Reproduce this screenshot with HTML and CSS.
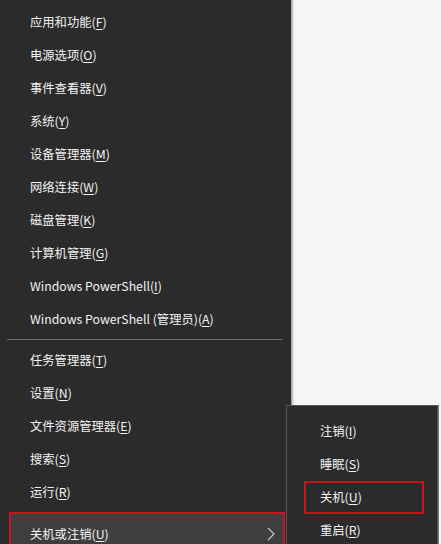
FILE: index.html
```html
<!DOCTYPE html>
<html>
<head>
<meta charset="utf-8">
<link rel="stylesheet" href="styles.css">
</head>
<body>
<div class="screen">
  <div class="menu">
    <div class="item">应用和功能(<u>F</u>)</div>
    <div class="item">电源选项(<u>O</u>)</div>
    <div class="item">事件查看器(<u>V</u>)</div>
    <div class="item">系统(<u>Y</u>)</div>
    <div class="item">设备管理器(<u>M</u>)</div>
    <div class="item">网络连接(<u>W</u>)</div>
    <div class="item">磁盘管理(<u>K</u>)</div>
    <div class="item">计算机管理(<u>G</u>)</div>
    <div class="item">Windows PowerShell(<u>I</u>)</div>
    <div class="item">Windows PowerShell (管理员)(<u>A</u>)</div>
    <div class="sep"></div>
    <div class="item">任务管理器(<u>T</u>)</div>
    <div class="item">设置(<u>N</u>)</div>
    <div class="item">文件资源管理器(<u>E</u>)</div>
    <div class="item">搜索(<u>S</u>)</div>
    <div class="item">运行(<u>R</u>)</div>
    <div class="item hot">
      <span>关机或注销(<u>U</u>)</span>
      <svg class="chev" width="8" height="14" viewBox="0 0 8 14"><path d="M1 1 L7 7 L1 13" fill="none" stroke="#cfcfcf" stroke-width="1.1"/></svg>
    </div>
  </div>
  <div class="shadow"></div>
  <div class="submenu">
    <div class="sitem">注销(<u>I</u>)</div>
    <div class="sitem">睡眠(<u>S</u>)</div>
    <div class="sitem boxed">关机(<u>U</u>)</div>
    <div class="sitem">重启(<u>R</u>)</div>
  </div>
</div>
</body>
</html>
```

FILE: styles.css
```css
html, body {
  margin: 0;
  padding: 0;
}
body {
  width: 441px;
  height: 544px;
  overflow: hidden;
  background: #f5f6f8;
  font-family: "Noto Sans CJK SC", "Noto Sans", sans-serif;
  font-size: 12.3px;
  color: #f2f2f2;
}
.screen {
  position: relative;
  width: 441px;
  height: 544px;
  display: flex;
}
.menu {
  width: 291px;
  height: 544px;
  background: #2b2b2b;
  padding-top: 6px;
  box-sizing: border-box;
  flex: none;
}
.shadow {
  width: 3px;
  height: 544px;
  background: linear-gradient(to right, #8e8e8e, #c9c9c9, #eceef0);
  flex: none;
}
.item {
  height: 33px;
  line-height: 33px;
  padding-left: 30px;
  white-space: nowrap;
}
u {
  text-decoration: underline;
  text-underline-offset: 2px;
  text-decoration-thickness: 1px;
}
.sep {
  height: 1px;
  background: #6e6e6e;
  margin: 3px 9px 4px 7px;
}
.hot {
  height: 40px;
  margin: 3px 6px 0 9px;
  padding-left: 19px;
  border: 2px solid #c8151b;
  border-bottom: none;
  background: #3e3e3e;
  display: flex;
  align-items: center;
  justify-content: space-between;
  padding-right: 8px;
}
.chev {
  display: block;
}
.submenu {
  position: absolute;
  left: 286px;
  top: 405px;
  width: 152px;
  height: 150px;
  background: #2b2b2b;
  border: 1px solid #555;
  box-sizing: border-box;
  padding-top: 9px;
  box-shadow: 1px 0 0 #777;
}
.sitem {
  height: 33px;
  line-height: 33px;
  padding-left: 33px;
  white-space: nowrap;
}
.boxed {
  margin-left: 17px;
  width: 120px;
  box-sizing: border-box;
  padding-left: 14px;
  border: 2px solid #c8151b;
  line-height: 29px;
}
```
